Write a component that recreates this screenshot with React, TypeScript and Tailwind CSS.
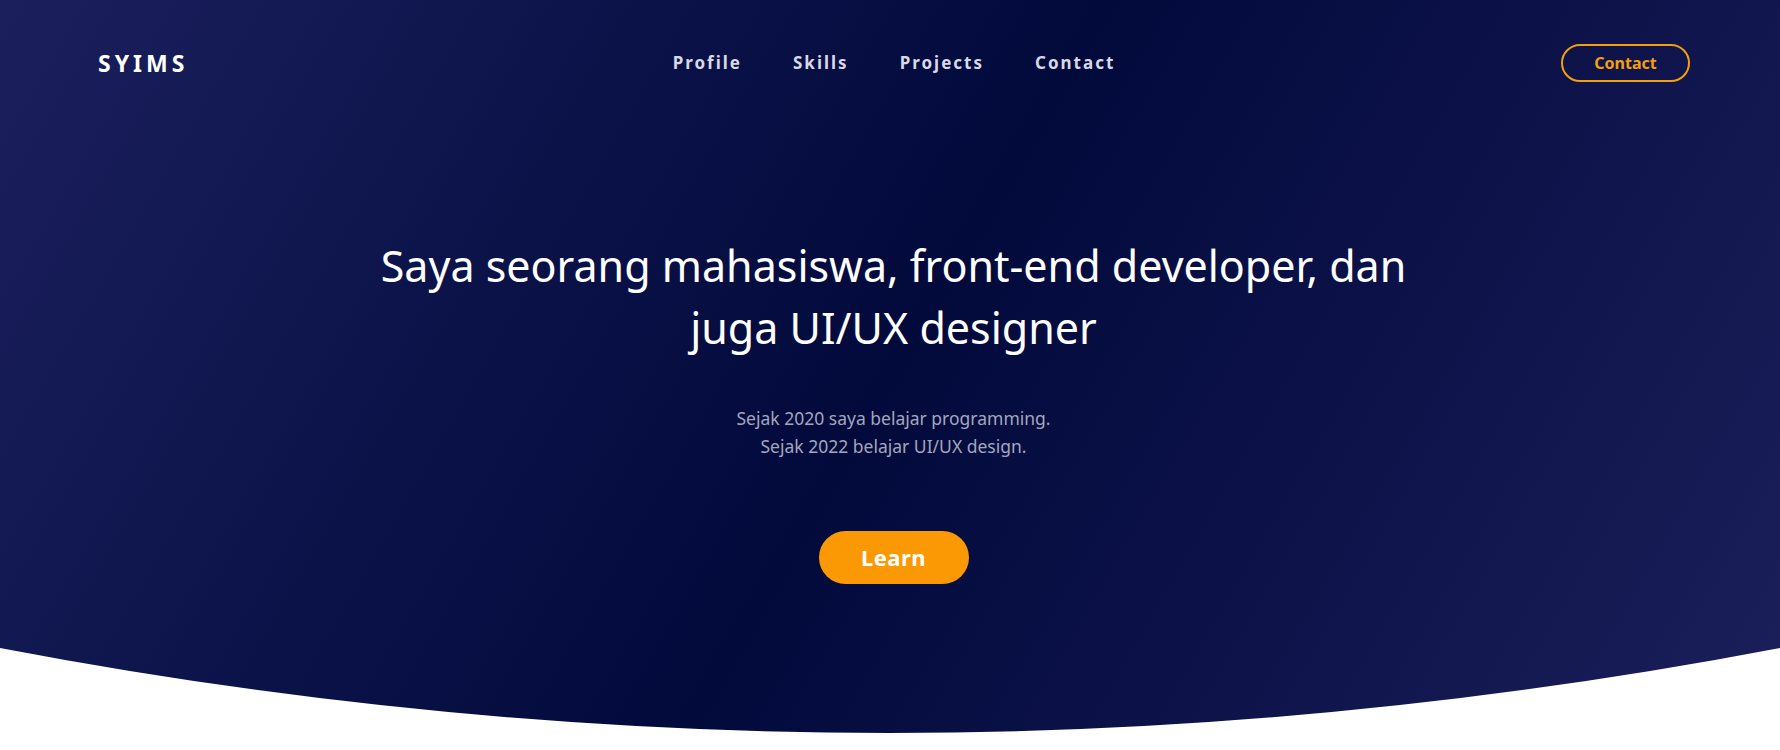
import React from "react";

export default function App() {
  return (
    <div className="w-full h-[750px] bg-white overflow-hidden" style={{ fontFamily: '"Noto Sans", "Open Sans", sans-serif' }}>
      <div className="relative h-[750px] w-full bg-[linear-gradient(120deg,#1b205d_0%,#0b1248_30%,#020a3c_50%,#0d1349_72%,#1b1f5b_100%)]">
        <header className="flex items-center justify-between pl-[98px] pr-[90px] pt-[44px]">
          <div className="w-[480px] text-[23px] font-bold tracking-[4px] text-white leading-[38px]">SYIMS</div>
          <nav className="flex items-center gap-[51px] text-[17px] font-bold tracking-[2px] text-[#d7d9e6]">
            <a>Profile</a>
            <a>Skills</a>
            <a>Projects</a>
            <a>Contact</a>
          </nav>
          <div className="w-[480px] flex justify-end">
            <button className="h-[38px] w-[129px] rounded-full border-2 border-[#f59f0a] text-[16px] font-bold text-[#f59f0a]">
              Contact
            </button>
          </div>
        </header>
        <main className="flex flex-col items-center pt-[153px] pl-[7px]">
          <h1 className="text-center text-[43px] leading-[62px] text-white font-normal max-w-[1100px]">
            Saya seorang mahasiswa, front-end developer, dan<br />juga UI/UX designer
          </h1>
          <p className="mt-[45px] text-center text-[17.5px] leading-[28px] text-[#a3a6bd]">
            Sejak 2020 saya belajar programming.<br />Sejak 2022 belajar UI/UX design.
          </p>
          <button className="mt-[71px] h-[53px] w-[150px] rounded-full bg-[#fb9904] text-[22px] font-bold text-white tracking-[0.5px]">
            Learn
          </button>
        </main>
        <svg className="absolute bottom-0 left-0 w-full h-[102px]" viewBox="0 0 1780 102" preserveAspectRatio="none">
          <path d="M0,0 Q890,170 1780,0 L1780,102 L0,102 Z" fill="#ffffff" />
        </svg>
      </div>
    </div>
  );
}
